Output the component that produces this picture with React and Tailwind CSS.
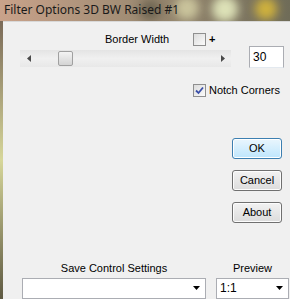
import React from "react";

const font = { fontFamily: '"Liberation Sans", Arial, sans-serif' };

function Check({ checked }) {
  return (
    <div className="w-[13px] h-[13px] border border-[#8f8f8f] bg-gradient-to-br from-[#dcdcdc] to-[#fbfbfb] flex items-center justify-center">
      {checked && (
        <svg width="9" height="9" viewBox="0 0 9 9">
          <path d="M1 4.5 L3.5 7 L8 1.5" fill="none" stroke="#3a4fa8" strokeWidth="1.8" />
        </svg>
      )}
    </div>
  );
}

function Btn({ children, primary }) {
  return (
    <div
      className={
        "w-[50px] h-[21px] rounded-[3px] border flex items-center justify-center text-[11px] text-black " +
        (primary
          ? "border-[#3c7fb1] bg-gradient-to-b from-[#eaf6fd] to-[#bee6fd] shadow-[inset_0_0_0_1px_#ffffff]"
          : "border-[#707070] bg-gradient-to-b from-[#f2f2f2] to-[#dcdcdc] shadow-[inset_0_0_0_1px_#fcfcfc]")
      }
    >
      {children}
    </div>
  );
}

function Arrow() {
  return (
    <svg width="7" height="4" viewBox="0 0 7 4">
      <path d="M0 0 H7 L3.5 4 Z" fill="#000" />
    </svg>
  );
}

export default function App() {
  return (
    <div className="w-[290px] h-[299px] overflow-hidden flex flex-col bg-[#6c6a52]" style={font}>
      {/* title bar */}
      <div className="relative h-[21px] shrink-0 overflow-hidden bg-gradient-to-r from-[#c9a28a] via-[#9c8a72] to-[#6f6c58]">
        <div className="absolute left-[175px] top-[-4px] w-[24px] h-[24px] rounded-full bg-[#d8d4a8] blur-[5px] opacity-80" />
        <div className="absolute left-[212px] top-[-4px] w-[26px] h-[26px] rounded-full bg-[#e6ecc0] blur-[5px] opacity-90" />
        <div className="absolute left-[255px] top-[-2px] w-[22px] h-[22px] rounded-full bg-[#d8b83a] blur-[5px] opacity-90" />
        <div className="absolute left-[140px] top-[0px] w-[20px] h-[20px] rounded-full bg-[#4f4c3c] blur-[6px] opacity-70" />
        <div
          className="relative pl-[4px] pt-[2px] text-[12px] leading-[16px] font-normal text-[#1a1a1a]"
          style={{ fontFamily: '"Noto Sans", "Open Sans", sans-serif' }}
        >
          Filter Options 3D BW Raised #1
        </div>
      </div>

      <div className="flex flex-1">
        {/* frame edge */}
        <div className="w-[3px] bg-gradient-to-b from-[#7a6a58] via-[#d7d79a] to-[#5f5a43]" />

        {/* client */}
        <div className="flex-1 bg-[#f0f0f0] border-t border-[#d8d8d8] text-[11px] text-black flex flex-col">
          <div className="flex items-end mt-[10px]">
            <div className="ml-[17px] w-[211px] flex flex-col">
              <div className="flex items-center h-[14px]">
                <span className="ml-[85px] w-[88px]">Border Width</span>
                <Check />
                <span className="ml-[3px] font-bold text-[11px]">+</span>
              </div>
              <div className="mt-[4px] h-[17px] bg-gradient-to-b from-[#e4e4e4] via-[#f0f0f0] to-[#e8e8e8] flex items-center">
                <div className="w-[17px] flex justify-center">
                  <svg width="4" height="7" viewBox="0 0 4 7">
                    <path d="M4 0 V7 L0 3.5 Z" fill="#4a4a4a" />
                  </svg>
                </div>
                <div className="ml-[21px] w-[15px] h-[15px] rounded-[2px] border border-[#a0a0a0] bg-gradient-to-b from-[#f4f4f4] to-[#d4d4d4]" />
                <div className="flex-1" />
                <div className="w-[17px] flex justify-center">
                  <svg width="4" height="7" viewBox="0 0 4 7">
                    <path d="M0 0 V7 L4 3.5 Z" fill="#4a4a4a" />
                  </svg>
                </div>
              </div>
            </div>
            <div className="ml-[18px] w-[35px] h-[22px] bg-white border border-[#abadb3] border-b-[#e3e9ef] flex items-center pl-[3px] text-[12px] mb-[-1px]">
              30
            </div>
          </div>

          <div className="flex items-center mt-[15px] ml-[190px]">
            <Check checked />
            <span className="ml-[3px]">Notch Corners</span>
          </div>

          <div className="flex flex-col gap-[11px] ml-[229px] mt-[39px]">
            <Btn primary>OK</Btn>
            <Btn>Cancel</Btn>
            <Btn>About</Btn>
          </div>

          <div className="flex mt-[38px]">
            <div className="ml-[19px] w-[184px] flex flex-col">
              <div className="text-center h-[14px] leading-[14px]">Save Control Settings</div>
              <div className="mt-[3px] h-[21px] bg-white border border-[#abadb3] flex items-center justify-end pr-[5px]">
                <Arrow />
              </div>
            </div>
            <div className="ml-[10px] w-[73px] flex flex-col">
              <div className="text-center h-[14px] leading-[14px]">Preview</div>
              <div className="mt-[3px] h-[21px] bg-white border border-[#abadb3] flex items-center justify-between pl-[3px] pr-[5px] text-[12px]">
                <span>1:1</span>
                <Arrow />
              </div>
            </div>
          </div>
        </div>
      </div>
    </div>
  );
}
